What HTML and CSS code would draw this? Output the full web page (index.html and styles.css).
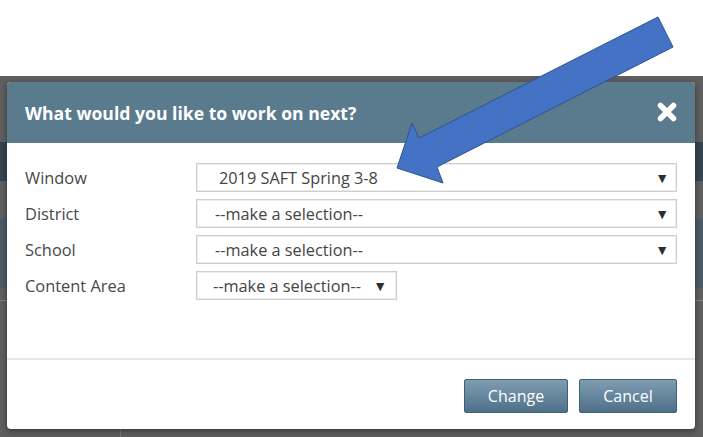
FILE: index.html
```html
<!DOCTYPE html>
<html>
<head>
<meta charset="utf-8">
<link rel="stylesheet" href="styles.css">
</head>
<body>
<div class="page">
  <div class="topband"></div>
  <div class="backdrop">
    <div class="gap g1"></div>
    <div class="stripe dark"></div>
    <div class="gap g2"></div>
    <div class="stripe teal"></div>
    <div class="gap g3"></div>
    <div class="rule"></div>
    <div class="rest"><div class="vline"></div></div>
  </div>

  <div class="modal">
    <div class="modal-head">
      <h1 class="title">What would you like to work on next?</h1>
      <svg class="close" viewBox="0 0 20 20" width="20" height="20">
        <path d="M3.5 3.5 L16.5 16.5 M16.5 3.5 L3.5 16.5" stroke="#fff" stroke-width="5.5" stroke-linecap="round"/>
      </svg>
    </div>
    <div class="modal-body">
      <div class="row">
        <span class="label">Window</span>
        <div class="select wide"><span>2019 SAFT Spring 3-8</span><span class="caret">&#9660;</span></div>
      </div>
      <div class="row">
        <span class="label">District</span>
        <div class="select wide sel2"><span>--make a selection--</span><span class="caret">&#9660;</span></div>
      </div>
      <div class="row">
        <span class="label">School</span>
        <div class="select wide sel2 tall"><span>--make a selection--</span><span class="caret">&#9660;</span></div>
      </div>
      <div class="row">
        <span class="label">Content Area</span>
        <div class="select narrow"><span>--make a selection--</span><span class="caret">&#9660;</span></div>
      </div>
    </div>
    <div class="modal-foot">
      <button class="btn change">Change</button>
      <button class="btn cancel">Cancel</button>
    </div>
  </div>

  <svg class="arrow" width="703" height="437" viewBox="0 0 703 437">
    <polygon points="658,17 673,47 437,167 443,183 397,168 412,123 419,138" fill="#4472c4" stroke="#2f528f" stroke-width="1"/>
  </svg>
</div>
</body>
</html>
```
FILE: styles.css
```css
html, body {
  margin: 0;
  padding: 0;
}
body {
  width: 703px;
  height: 437px;
  overflow: hidden;
  background: #fff;
  font-family: "Open Sans", "Liberation Sans", sans-serif;
}
.page {
  position: relative;
  width: 703px;
  height: 437px;
  display: flex;
  flex-direction: column;
}
.topband {
  height: 76px;
  background: #ffffff;
  flex: none;
}
.backdrop {
  flex: 1;
  background: #5f5f5f;
  display: flex;
  flex-direction: column;
}
.g1 { height: 66px; }
.stripe.dark { height: 39px; background: #374550; }
.g2 { height: 38px; }
.stripe.teal { height: 69px; background: #4a5c69; }
.g3 { height: 12px; }
.rule { height: 1px; background: #808080; }
.rest { flex: 1; position: relative; }
.vline {
  position: absolute;
  left: 120px;
  bottom: 0;
  width: 1px;
  height: 10px;
  background: #7a7a7a;
}

.modal {
  position: absolute;
  left: 7px;
  top: 82px;
  width: 688px;
  height: 347px;
  background: #fff;
  border-radius: 4px;
  overflow: hidden;
  box-shadow: 0 2px 6px rgba(0,0,0,0.45);
  display: flex;
  flex-direction: column;
}
.modal-head {
  height: 61px;
  background: #5a7a8e;
  display: flex;
  align-items: center;
  justify-content: space-between;
  padding: 0 18px 0 18px;
  flex: none;
}
.title {
  margin: 0;
  color: #fff;
  font-size: 17.6px;
  font-weight: 700;
  letter-spacing: 0;
}
.close {
  display: block;
  margin-top: -2px;
}
.modal-body {
  height: 217px;
  flex: none;
  padding: 20px 18px 0 18px;
  box-sizing: border-box;
  border-bottom: 2px solid #e8e8e8;
  display: flex;
  flex-direction: column;
  gap: 7px;
}
.row {
  display: flex;
  align-items: center;
}
.label {
  width: 171px;
  flex: none;
  font-size: 16.4px;
  color: #484848;
}
.select {
  height: 29px;
  box-sizing: border-box;
  border: 1px solid #cfcfcf;
  box-shadow: inset 0 0 0 1px #ececec;
  display: flex;
  align-items: center;
  justify-content: space-between;
  font-size: 16.3px;
  color: #444;
  padding: 0 7px 0 22px;
}
.select.sel2 { padding-left: 18px; }
.select.wide { width: 481px; }
.select.narrow { width: 201px; padding-left: 16px; padding-right: 9px; }
.caret {
  font-size: 14px;
  line-height: 1;
  color: #2e2e2e;
}
.modal-foot {
  flex: 1;
  display: flex;
  justify-content: flex-end;
  align-items: flex-start;
  padding: 19px 18px 0 0;
  gap: 11px;
}
.btn {
  height: 34px;
  border: 1px solid #3f5f75;
  border-radius: 2px;
  background: linear-gradient(#7e9db3, #4f7089);
  color: #fff;
  font-family: "Open Sans", "Liberation Sans", sans-serif;
  font-size: 16px;
  padding: 0;
}
.btn.change { width: 104px; }
.btn.cancel { width: 98px; }
.arrow {
  position: absolute;
  left: 0;
  top: 0;
  pointer-events: none;
}
```
